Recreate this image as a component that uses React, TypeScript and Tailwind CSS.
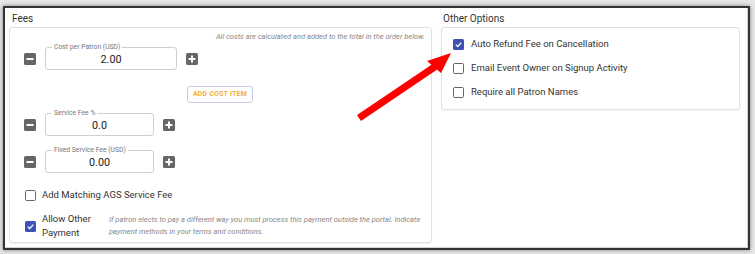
import React from "react"
import clsx from "clsx"

const Step: React.FC<{sign: "-" | "+"; className?: string}> = ({sign, className}) => (
  <span className={clsx("flex h-[12px] w-[12px] shrink-0 items-center justify-center rounded-[1.5px] bg-[#666]", className)}>
    <svg width="8" height="8" viewBox="0 0 8 8">
      <rect x="0.5" y="3" width="7" height="2" fill="#fff" />
      {sign === "+" && <rect x="3" y="0.5" width="2" height="7" fill="#fff" />}
    </svg>
  </span>
)

const Check: React.FC<{checked?: boolean}> = ({checked}) =>
  checked ? (
    <span className="flex h-[11px] w-[11px] shrink-0 items-center justify-center rounded-[1.5px] bg-[#3f51b5]">
      <svg width="9" height="9" viewBox="0 0 9 9">
        <path d="M1.8 4.6l1.9 1.9L7.3 2.6" stroke="#fff" strokeWidth="1.3" fill="none" />
      </svg>
    </span>
  ) : (
    <span className="h-[11px] w-[11px] shrink-0 rounded-[1.5px] border-[1.5px] border-[#666]" />
  )

const CostRow: React.FC<{label: string; value: string; width: string; className?: string}> = ({label, value, width, className}) => (
  <div className={clsx("flex items-end gap-[9px] pl-[14px]", className)}>
    <Step sign="-" className="mb-[5px]" />
    <fieldset className={clsx("rounded-[3px] border border-[#cfcfcf] px-[6px]", width)}>
      <legend className="px-[2px] text-[6.8px] leading-[8px] text-[#777]">{label}</legend>
      <div className="h-[18px] text-center text-[10.8px] leading-[18px] text-[#222]">{value}</div>
    </fieldset>
    <Step sign="+" className="mb-[5px]" />
  </div>
)

const Option: React.FC<{label: string; checked?: boolean}> = ({label, checked}) => (
  <div className="flex h-[24px] items-center gap-[7px] pl-[11px]">
    <Check checked={checked} />
    <span className="text-[9.5px] text-[#333]">{label}</span>
  </div>
)

export default function App() {
  return (
    <div className="relative h-[254px] w-[755px] overflow-hidden bg-[#e6e6e6] pl-[3px] pt-[6px] font-[Roboto,sans-serif]">
      <div className="flex h-[244px] w-[747px] gap-[9px] border-2 border-[#333] bg-white px-[4px] shadow-[0_0_4px_rgba(0,0,0,0.45),inset_-1px_-1px_0_#d4d4d4]">
        <div className="flex w-[423px] flex-col">
          <div className="h-[19px] pl-[3px] pt-[5px] text-[10px] leading-[12px] text-[#333]">Fees</div>
          <div className="flex h-[216px] flex-col rounded-[3px] border border-[#e0e0e0] shadow-[0_1px_1px_rgba(0,0,0,0.06)]">
            <div className="pr-[6px] pt-[4px] text-right text-[7.5px] italic leading-[10px] text-[#888]">
              All costs are calculated and added to the total in the order below.
            </div>
            <CostRow label="Cost per Patron (USD)" value="2.00" width="w-[132px]" className="mt-[1px]" />
            <button className="ml-[177px] mt-[16px] h-[17px] w-[66px] rounded-[3px] border border-[#c5cae9] bg-white text-[7px] font-bold tracking-[0.2px] text-[#f3ae33]">
              ADD COST ITEM
            </button>
            <CostRow label="Service Fee %" value="0.0" width="w-[109px]" className="mt-[6px]" />
            <CostRow label="Fixed Service Fee (USD)" value="0.00" width="w-[109px]" className="mt-[10px]" />
            <div className="mt-[15px] flex h-[14px] items-center gap-[6px] pl-[15px]">
              <Check />
              <span className="text-[9.5px] text-[#333]">Add Matching AGS Service Fee</span>
            </div>
            <div className="mt-[10px] flex items-center pl-[15px]">
              <Check checked />
              <span className="ml-[6px] w-[58px] text-[9.5px] leading-[14px] text-[#333]">Allow Other Payment</span>
              <p className="ml-[9px] flex-1 pr-[4px] text-[7.5px] italic leading-[12px] text-[#888]">
                If patron elects to pay a different way you must process this payment outside the portal. Indicate payment methods in your terms and conditions.
              </p>
            </div>
          </div>
        </div>
        <div className="flex w-[299px] flex-col">
          <div className="h-[19px] pl-[2px] pt-[5px] text-[10px] leading-[12px] text-[#333]">Other Options</div>
          <div className="flex h-[83px] flex-col rounded-[3px] border border-[#e0e0e0] pt-[4px] shadow-[0_1px_1px_rgba(0,0,0,0.06)]">
            <Option label="Auto Refund Fee on Cancellation" checked />
            <Option label="Email Event Owner on Signup Activity" />
            <Option label="Require all Patron Names" />
          </div>
        </div>
      </div>
      {/* annotation arrow drawn over the screenshot */}
      <svg className="pointer-events-none absolute left-0 top-0" width="755" height="254" viewBox="0 0 755 254">
        <line x1="359" y1="118" x2="436" y2="66" stroke="#ff0000" strokeWidth="7" />
        <polygon points="451,53 427,61 441,73" fill="#ff0000" />
      </svg>
    </div>
  )
}
